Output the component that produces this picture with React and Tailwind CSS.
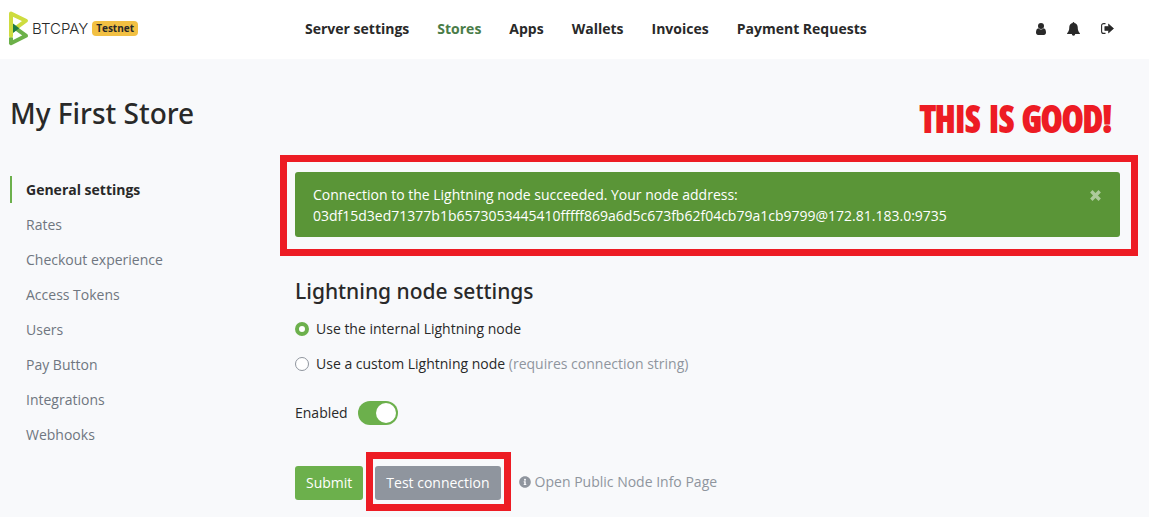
import { FaInfoCircle } from "react-icons/fa";

const navLinks = ["Server settings", "Stores", "Apps", "Wallets", "Invoices", "Payment Requests"];
const sections = [
  "General settings",
  "Rates",
  "Checkout experience",
  "Access Tokens",
  "Users",
  "Pay Button",
  "Integrations",
  "Webhooks",
];

function Logo() {
  return (
    <svg viewBox="0 0 20 36" className="h-9 w-5" fill="none" strokeLinecap="round" strokeLinejoin="round" aria-hidden="true">
      <path d="M3 32.200 L17.900 24.700 L5 15.400" stroke="#6cb049" strokeWidth="4" />
      <path d="M3 25 V2.600 L17.900 9.700 L5 19.200" stroke="#cedc3f" strokeWidth="4" />
      <path d="M5 12.600 L11.300 17.300 L5 22 Z" fill="#1e7a44" />
      <path d="M3 32.200 V26.500" stroke="#6cb049" strokeWidth="4" strokeLinecap="butt" />
    </svg>
  );
}

function UserIcon() {
  return (
    <svg viewBox="0 0 10 12" className="h-3 w-[10px]" fill="currentColor" aria-hidden="true">
      <circle cx="5" cy="3" r="3" />
      <path d="M2.400 5.300C.8 5.600 0 7.200 0 9.600 0 11 .9 12 2.100 12h5.800C9.100 12 10 11 10 9.600 10 7.200 9.200 5.600 7.600 5.300a3.700 3.700 0 0 1-5.200 0Z" />
    </svg>
  );
}

function BellIcon() {
  return (
    <svg viewBox="0 0 13 14" className="h-[14px] w-[13px]" fill="currentColor" aria-hidden="true">
      <path d="M6.500 0a.8.8 0 0 1 .8.9C9.500 1.300 10.700 3 10.700 5c0 3.200.8 4.900 2.300 6.200 0 .5-.4.900-.9.900H.9c-.5 0-.9-.4-.9-.9C1.500 9.900 2.300 8.200 2.300 5c0-2 1.200-3.700 3.400-4.100a.8.8 0 0 1 .8-.9Z" />
      <path d="M4.800 12.100a1.700 1.700 0 0 0 3.400 0Z" />
    </svg>
  );
}

function SignOutIcon() {
  return (
    <svg viewBox="0 0 13 11" className="h-[11px] w-[13px]" aria-hidden="true">
      <path d="M4.500 .6H2.600a2 2 0 0 0-2 2v5.800a2 2 0 0 0 2 2H4.500" fill="none" stroke="currentColor" strokeWidth="1.100" />
      <path d="M3.800 3.500H7.500V1L12.600 5.500 7.500 10V7.500H3.800Z" fill="currentColor" stroke="currentColor" strokeWidth=".6" strokeLinejoin="round" />
    </svg>
  );
}

export default function App() {
  return (
    <div className="min-h-screen bg-[#f8f9fb] font-['Open_Sans',sans-serif] text-sm text-[#292929]">
      <header className="flex h-[59px] items-center bg-white pr-[35px] pb-0.5 pl-2">
        <a href="#home" className="flex w-[281px] items-center gap-1" aria-label="BTCPAY Testnet">
          <Logo />
          <span className="font-['Inter',sans-serif] text-[15px] font-light">BTCPAY</span>
          <span className="rounded bg-[#f2c043] px-1 text-[10px] leading-[15px] font-bold">Testnet</span>
        </a>
        <nav className="ml-4 flex flex-1 gap-7 font-bold">
          {navLinks.map((label) => (
            <a key={label} href="#nav" className={label === "Stores" ? "text-[#497c48]" : ""}>
              {label}
            </a>
          ))}
        </nav>
        <div className="flex items-center gap-[21px]">
          <a href="#account" aria-label="Account"><UserIcon /></a>
          <a href="#notifications" aria-label="Notifications"><BellIcon /></a>
          <a href="#logout" aria-label="Log out"><SignOutIcon /></a>
        </div>
      </header>

      <div className="flex items-start justify-between pt-8 pr-[37px] pl-[10px]">
        <h1 className="font-['Noto_Sans',sans-serif] text-[28px] leading-[44px] font-medium">My First Store</h1>
        <p className="mt-3 font-['Impact','Open_Sans_Condensed',sans-serif] text-[35px] leading-8 font-bold text-[#ed1c24] [-webkit-text-stroke:2px_#ed1c24]">
          THIS IS GOOD!
        </p>
      </div>

      <div className="flex pt-[37px] pr-[29px] pl-[10px]">
        <nav className="flex w-[285px] shrink-0 flex-col gap-2 pt-1 text-[#6f7680]">
          {sections.map((label, i) => (
            <a
              key={label}
              href="#section"
              className={
                i === 0
                  ? "border-l-2 border-[#6cb04c] pl-[14px] leading-[27px] font-bold text-[#292929]"
                  : "border-l-2 border-transparent pl-[14px] leading-[27px]"
              }
            >
              {label}
            </a>
          ))}
        </nav>

        <main className="min-w-0 flex-1">
          <div className="relative flex items-start justify-between rounded-[3px] bg-[#5a9537] pt-3 pr-[19px] pb-[11px] pl-[18px] leading-[21px] text-white">
            <p className="min-w-0 break-words">
              Connection to the Lightning node succeeded. Your node address:
              <br />
              03df15d3ed71377b1b6573053445410fffff869a6d5c673fb62f04cb79a1cb9799@172.81.183.0:9735
            </p>
            <button type="button" aria-label="Close" className="pt-[6px] text-white/50">
              <svg viewBox="0 0 11 11" className="size-[11px]" stroke="currentColor" strokeWidth="3.400" aria-hidden="true">
                <path d="M1.300 1.300 9.700 9.700M9.700 1.300 1.300 9.700" />
              </svg>
            </button>
            <div className="pointer-events-none absolute -top-[17px] -right-[18px] -bottom-[19px] -left-[15px] border-[7px] border-[#ed1c24]" />
          </div>

          <h2 className="mt-10 font-['Noto_Sans',sans-serif] text-[21px] leading-7 font-medium">Lightning node settings</h2>

          <div className="mt-[13px] flex flex-col gap-[14px] leading-[21px]">
            <label className="flex items-center gap-[7px]">
              <input type="radio" name="node" defaultChecked className="size-[14px] appearance-none rounded-full border border-[#8f959e] bg-white checked:border-4 checked:border-[#6cb04c]" />
              <span>Use the internal Lightning node</span>
            </label>
            <label className="flex items-center gap-[7px]">
              <input type="radio" name="node" className="size-[14px] appearance-none rounded-full border border-[#8f959e] bg-white checked:border-4 checked:border-[#6cb04c]" />
              <span>
                Use a custom Lightning node <span className="text-[#8f959e]">(requires connection string)</span>
              </span>
            </label>
          </div>

          <label className="mt-[27px] flex w-fit items-center gap-[10px]">
            <span>Enabled</span>
            <input
              type="checkbox"
              role="switch"
              defaultChecked
              className="flex h-6 w-10 appearance-none items-center rounded-full bg-[#8f959e] px-[2px] before:size-5 before:rounded-full before:bg-white checked:justify-end checked:bg-[#6cb04c]"
            />
          </label>

          <div className="mt-[41px] flex items-center pb-4">
            <button type="button" className="h-[34px] rounded-[3px] bg-[#6cb04c] px-[11px] text-white">Submit</button>
            <div className="relative ml-3">
              <button type="button" className="block h-[34px] rounded-[3px] bg-[#8f959e] px-[11px] text-white">Test connection</button>
              <div className="pointer-events-none absolute -top-[14px] -right-[10px] -bottom-[11px] -left-[9px] border-[7px] border-[#ed1c24]" />
            </div>
            <a href="#node-info" className="ml-[18px] flex items-center gap-1 pb-0.5 text-[#8f959e]">
              <FaInfoCircle className="size-3" />
              Open Public Node Info Page
            </a>
          </div>
        </main>
      </div>
    </div>
  );
}
